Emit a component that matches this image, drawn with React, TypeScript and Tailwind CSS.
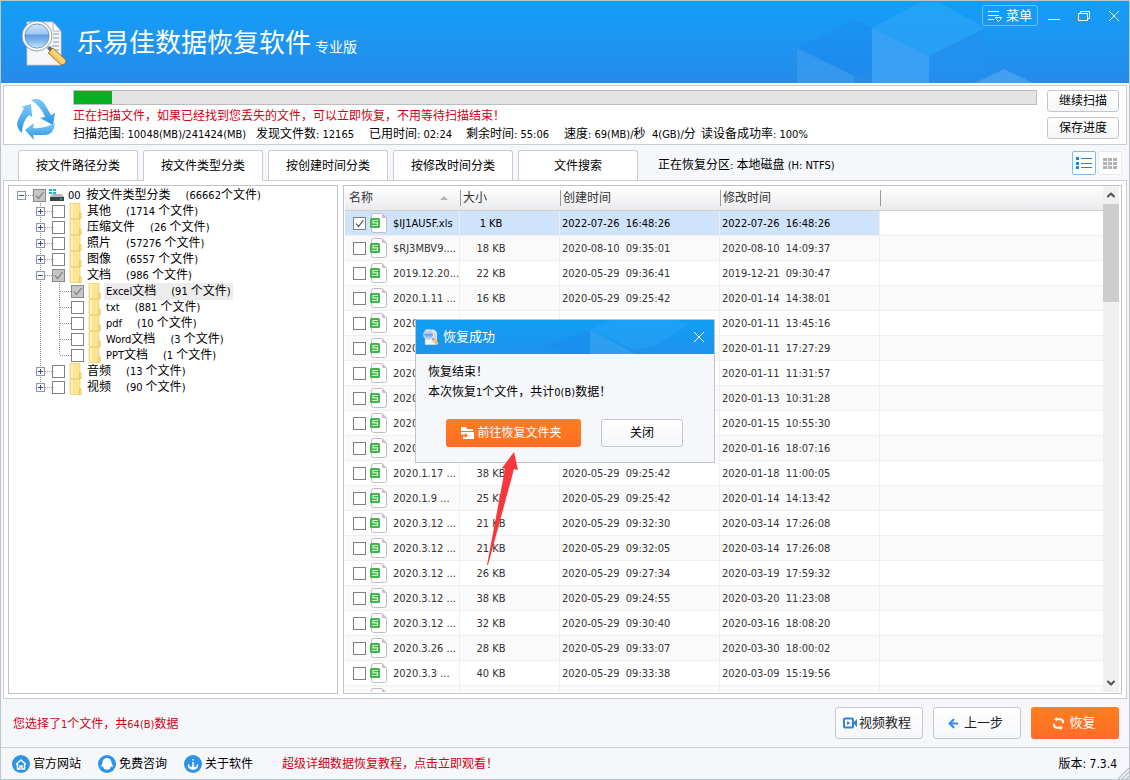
import { useState } from 'react';
import { ArrowLeft, ChevronDown, ChevronUp } from 'lucide-react';
import clsx from 'clsx';

type TreeItem = {
  label: string;
  count: string;
  level: 0 | 1 | 2;
  open?: boolean;
  checked?: boolean;
  last?: boolean;
};

const tree: TreeItem[] = [
  { label: '按文件类型分类', count: '(66662个文件)', level: 0, open: true, checked: true },
  { label: '其他', count: '(1714 个文件)', level: 1 },
  { label: '压缩文件', count: '(26 个文件)', level: 1 },
  { label: '照片', count: '(57276 个文件)', level: 1 },
  { label: '图像', count: '(6557 个文件)', level: 1 },
  { label: '文档', count: '(986 个文件)', level: 1, open: true, checked: true },
  { label: 'Excel文档', count: '(91 个文件)', level: 2, checked: true },
  { label: 'txt', count: '(881 个文件)', level: 2 },
  { label: 'pdf', count: '(10 个文件)', level: 2 },
  { label: 'Word文档', count: '(3 个文件)', level: 2 },
  { label: 'PPT文档', count: '(1 个文件)', level: 2, last: true },
  { label: '音频', count: '(13 个文件)', level: 1 },
  { label: '视频', count: '(90 个文件)', level: 1, last: true },
];

// name, size, created, modified
const files: [string, string, string, string][] = [
  ['$IJ1AU5F.xls', '1 KB', '2022-07-26  16:48:26', '2022-07-26  16:48:26'],
  ['$RJ3MBV9....', '18 KB', '2020-08-10  09:35:01', '2020-08-10  14:09:37'],
  ['2019.12.20...', '22 KB', '2020-05-29  09:36:41', '2019-12-21  09:30:47'],
  ['2020.1.11 ...', '16 KB', '2020-05-29  09:25:42', '2020-01-14  14:38:01'],
  ['2020', '', '', '2020-01-11  13:45:16'],
  ['2020', '', '', '2020-01-11  17:27:29'],
  ['2020', '', '', '2020-01-11  11:31:57'],
  ['2020', '', '', '2020-01-13  10:31:28'],
  ['2020', '', '', '2020-01-15  10:55:30'],
  ['2020', '', '', '2020-01-16  18:07:16'],
  ['2020.1.17 ...', '38 KB', '2020-05-29  09:25:42', '2020-01-18  11:00:05'],
  ['2020.1.9 ...', '25 KB', '2020-05-29  09:25:42', '2020-01-14  14:13:42'],
  ['2020.3.12 ...', '21 KB', '2020-05-29  09:32:30', '2020-03-14  17:26:08'],
  ['2020.3.12 ...', '21 KB', '2020-05-29  09:32:05', '2020-03-14  17:26:08'],
  ['2020.3.12 ...', '26 KB', '2020-05-29  09:27:34', '2020-03-19  17:59:32'],
  ['2020.3.12 ...', '38 KB', '2020-05-29  09:24:55', '2020-03-20  11:23:08'],
  ['2020.3.12 ...', '32 KB', '2020-05-29  09:30:40', '2020-03-16  18:08:20'],
  ['2020.3.26 ...', '28 KB', '2020-05-29  09:33:07', '2020-03-30  18:00:02'],
  ['2020.3.3 ...', '40 KB', '2020-05-29  09:33:38', '2020-03-09  15:19:56'],
  ['', '', '', ''],
];

const tabs = ['按文件路径分类', '按文件类型分类', '按创建时间分类', '按修改时间分类', '文件搜索'];

// Latin runs are set one pixel smaller than the Chinese around them
const Mixed = ({ text }: { text: string }) => (
  <>
    {text.split(/([\x20-\x7e]+)/).map((part, i) =>
      i % 2 ? (
        <span key={i} className="text-[11px]">
          {part}
        </span>
      ) : (
        part
      ),
    )}
  </>
);

const Check = ({ label, checked, partial }: { label: string; checked?: boolean; partial?: boolean }) => (
  <span className="grid h-[13px] w-[13px] shrink-0">
    <input
      type="checkbox"
      aria-label={label}
      defaultChecked={checked}
      className={clsx(
        'peer col-start-1 row-start-1 m-0 h-[13px] w-[13px] appearance-none border border-[#808080] bg-white',
        partial && 'checked:border-[#8a8a8a] checked:bg-[#c6c6c6]',
      )}
    />
    <svg
      viewBox="0 0 13 13"
      className="pointer-events-none invisible col-start-1 row-start-1 h-[13px] w-[13px] peer-checked:visible"
    >
      <path d="M3 6.5 5.5 9.5 10.5 3" fill="none" stroke={partial ? '#777' : '#444'} strokeWidth="1.1" />
    </svg>
  </span>
);

const Logo = ({ className }: { className: string }) => (
  <svg viewBox="0 0 46 46" className={className} aria-hidden="true">
    <defs>
      <linearGradient id="lens" x1="0" y1="0" x2="0" y2="1">
        <stop offset="0" stopColor="#d3e6fb" />
        <stop offset=".42" stopColor="#9cc6f3" />
        <stop offset=".46" stopColor="#5d9be4" />
        <stop offset=".75" stopColor="#8bbdf0" />
        <stop offset="1" stopColor="#c9edfd" />
      </linearGradient>
      <linearGradient id="handle" x1="0" y1="1" x2="1" y2="0">
        <stop offset="0" stopColor="#c87b10" />
        <stop offset=".55" stopColor="#ffd977" />
        <stop offset="1" stopColor="#a8640c" />
      </linearGradient>
    </defs>
    <path d="M6 2h26l8 9v34H6z" fill="#f6f6f8" stroke="#c9ced8" strokeWidth=".8" />
    <path d="M32 2v9h8z" fill="#fff" stroke="#9aa5b8" strokeWidth=".8" />
    <path d="M32 14h6M32 18h6M32 22h6M31 26h7M29 30h9" stroke="#8795ad" strokeWidth="1.2" />
    <circle cx="16" cy="16" r="15" fill="#e3e8f0" stroke="#8693a9" strokeWidth=".8" />
    <circle cx="16" cy="16" r="13.500" fill="none" stroke="#fff" strokeWidth="1.200" />
    <circle cx="16" cy="16" r="12" fill="url(#lens)" stroke="#7489ac" strokeWidth=".8" />
    <path d="M26 28l3-2 3 3-3 3z" fill="#5d6880" />
    <path d="M27 33l5-5 13 12q0 5-5 5z" fill="url(#handle)" stroke="#8a5a17" strokeWidth=".7" />
  </svg>
);

const RecycleLogo = () => (
  <svg viewBox="0 0 40 42" className="h-[42px] w-10" aria-hidden="true">
    <defs>
      <linearGradient id="recycle" x1="0" y1="0" x2="0" y2="1">
        <stop offset="0" stopColor="#7cc9f7" />
        <stop offset="1" stopColor="#2893e2" />
      </linearGradient>
    </defs>
    <g fill="url(#recycle)">
      <path d="M15 2q8-3 13 3l7 12 4-2-2 12-13-7 5-1q-4-11-14-17z" />
      <path d="M5 9l10-3 1 13-3-2Q6 24 6 35q-7-6-4-13l6-12z" />
      <path d="M9 32l9-7-1 5q11 1 22-5-1 11-9 12H17l1 5z" />
    </g>
  </svg>
);

// Expand box plus the dotted connector that leads to the tick box
const Branch = ({ item }: { item: TreeItem }) => {
  const dots = { stroke: '#8c8c8c', strokeDasharray: '1 1' };
  return (
    <svg viewBox="0 0 16 16" className="h-4 w-4 shrink-0" shapeRendering="crispEdges" aria-hidden="true">
      {item.level > 0 && <path d={item.last ? 'M4.5 0v8' : 'M4.5 0v16'} {...dots} />}
      <path d="M5 8.5h11" {...dots} />
      {item.level < 2 && (
        <>
          <rect x=".5" y="4.5" width="8" height="8" fill="#f8f9fb" stroke="#8f98a4" />
          <path d={item.open ? 'M2 8.5h5' : 'M2 8.5h5M4.5 6v5'} stroke="#3c4f86" />
        </>
      )}
    </svg>
  );
};

const TreeRow = ({ item }: { item: TreeItem }) => (
  <li className="flex h-4 items-center">
    {item.level > 0 && <span className="w-[19px] shrink-0" />}
    {item.level > 1 && (
      <svg viewBox="0 0 19 16" className="h-4 w-[19px] shrink-0" shapeRendering="crispEdges" aria-hidden="true">
        <path d="M4.5 0v16" stroke="#8c8c8c" strokeDasharray="1 1" />
      </svg>
    )}
    <Branch item={item} />
    <Check label={item.label} checked={item.checked} partial />
    <span className="flex w-5 shrink-0 justify-center">
      {item.level === 0 ? (
        <svg viewBox="0 0 15 14" className="h-3.5 w-[15px]">
          <path d="M0 1h3v2H0zM4 1h3v2H4zM0 4h3v2H0zM4 4h3v2H4z" fill="#20aee8" />
          <path d="M3 6h10l2 3H1z" fill="#b4bcc0" />
          <path d="M1 9h14v4H1z" fill="#3b4548" />
          <path d="M11 10.5h2v1h-2z" fill="#58dc83" />
        </svg>
      ) : (
        <svg viewBox="0 0 13 16" className="h-4 w-[13px]">
          <path d="M1 .5h10v9l1 1v5H1z" fill="#fde596" stroke="#eccb62" strokeWidth=".7" />
          <path d="M2 1h2v14H2z" fill="#fff0b8" />
          <path d="M10.500 10h1.500v5.500h-1.500z" fill="#fff0b5" stroke="#e3b93f" strokeWidth=".7" />
        </svg>
      )}
    </span>
    <span
      className={clsx(
        'flex gap-[15px] whitespace-pre px-0.5 leading-4',
        item.label === 'Excel文档' && 'bg-[#ececec]',
      )}
    >
      <span>
        {item.level === 0 && <span className="pr-1.5 text-[11px]">00</span>}
        <Mixed text={item.label} />
      </span>
      <span>
        <Mixed text={item.count} />
      </span>
    </span>
  </li>
);

const SheetIcon = () => (
  <svg viewBox="0 0 17 20" className="h-5 w-[17px] shrink-0" aria-hidden="true">
    <path d="M3.5.5h8.500l4.500 4.500v12.500q0 2-2 2h-11q-2 0-2-2v-15q0-2 2-2z" fill="#fff" stroke="#c3b8c5" />
    <path d="M12 .5v3q0 1.500 1.500 1.500h3z" fill="#d4b6c8" />
    <rect x="0" y="5" width="10" height="10" rx="1.500" fill="#3fb54b" />
    <path d="M8 7.500H3v2.300h4.500v2.700H2" fill="none" stroke="#d6f5d2" strokeWidth="1.200" />
  </svg>
);

const CloseCross = () => (
  <svg viewBox="0 0 12 12" className="h-3 w-3" aria-hidden="true">
    <path d="M1 1l10 10M11 1 1 11" stroke="#fff" />
  </svg>
);

const FileTable = () => (
  <table className="w-full table-fixed border-separate border-spacing-0 text-left text-[11px] text-[#333]">
    <colgroup>
      <col className="w-[115px]" />
      <col className="w-[100px]" />
      <col className="w-40" />
      <col className="w-40" />
      <col />
    </colgroup>
    <thead>
      <tr className="bg-linear-to-b from-white to-[#e9eaec] text-xs">
        {['名称', '大小', '创建时间', '修改时间', ''].map((title, i) => (
          <th key={i} className="h-[25px] border-b border-[#cfcfcf] p-0 font-normal">
            <span
              className={clsx(
                'flex h-4 items-center leading-4',
                i === 0 ? 'justify-between pr-3 pl-1' : 'border-l border-[#999] pl-0.5',
              )}
            >
              {title}
              {i === 0 && (
                <svg viewBox="0 0 8 4" className="h-1 w-2">
                  <path d="M0 4 4 0l4 4z" fill="#b5b5b5" />
                </svg>
              )}
            </span>
          </th>
        ))}
      </tr>
    </thead>
    <tbody>
      {files.map(([name, size, created, modified], i) => {
        const cell = clsx(
          'h-[25px] overflow-hidden border-r border-b border-[#efefef] p-0 whitespace-pre',
          i === 0 && 'bg-[#cfe3fa] text-black',
        );
        return (
          <tr key={i} className="even:bg-[#fafafa]">
            <td className={cell}>
              <span className="flex items-center gap-1 pl-2">
                <Check label={name || '文件'} checked={i === 0} />
                <SheetIcon />
                <span className="pt-0.5 pl-0.5">{name}</span>
              </span>
            </td>
            <td className={cell}>
              <span className="block w-[62px] pt-0.5 text-center">{size}</span>
            </td>
            <td className={cell}>
              <span className="block pt-0.5 pl-0.5">{created}</span>
            </td>
            <td className={cell}>
              <span className="block pt-0.5 pl-0.5">{modified}</span>
            </td>
            <td className="h-[25px] border-b border-[#efefef] p-0" />
          </tr>
        );
      })}
    </tbody>
  </table>
);

const plainButton =
  'flex items-center justify-center rounded-[3px] border border-[#c3c6cb] bg-linear-to-b from-white to-[#f5f6f8]';
const orangeButton =
  'flex items-center justify-center rounded-[3px] bg-linear-to-b from-[#ff7f1c] to-[#ff6b26] text-white';

const SuccessDialog = ({ onClose }: { onClose: () => void }) => (
  <div className="pointer-events-none absolute inset-0 flex items-center justify-center pt-0.5">
    <div
      role="dialog"
      aria-label="恢复成功"
      className="pointer-events-auto relative h-36 w-[300px] border border-[#c0c4c9] bg-[#f5f7fa]"
    >
      <div className="relative flex h-[34px] items-center justify-between bg-linear-to-b from-[#109ef4] to-[#1d92ec] pr-[9px] pl-[7px] text-[13px] text-white">
        <svg viewBox="0 0 298 34" preserveAspectRatio="xMaxYMax slice" className="absolute inset-0 h-full w-full">
          <path d="M174 10 194 0h66l12 5-34 22-20 3z" fill="#2aa8fa" opacity=".4" />
          <path d="M174 10l45 24h-45z" fill="#4eacf6" opacity=".4" />
          <path d="M132 25l42-15v24h-26z" fill="#1784ea" opacity=".3" />
        </svg>
        <span className="relative flex items-center gap-1">
          <Logo className="h-4 w-4" />
          恢复成功
        </span>
        <button type="button" aria-label="关闭窗口" onClick={onClose} className="relative">
          <CloseCross />
        </button>
      </div>
      <div className="px-3 pt-2 leading-5">
        <p>恢复结束！</p>
        <p>
          <Mixed text="本次恢复1个文件，共计0(B)数据！" />
        </p>
      </div>
      <div className="flex gap-5 pt-4 pl-[30px]">
        <button type="button" className={clsx(orangeButton, 'h-7 w-[135px] gap-[3px] pr-1')}>
          <svg viewBox="0 0 13 12" className="h-3 w-[13px]" aria-hidden="true">
            <path d="M0 0h5l1 2h6v2H0z" fill="#fff" />
            <path d="M2 5h11v7H2V9.500h2V11l3-2.500L4 6v1.500H0V5z" fill="#fff" />
          </svg>
          前往恢复文件夹
        </button>
        <button type="button" onClick={onClose} className={clsx(plainButton, 'h-7 w-[82px]')}>
          关闭
        </button>
      </div>
      <svg viewBox="0 0 34 114" className="pointer-events-none absolute top-[131px] left-[70px] h-[114px] w-[34px]">
        <path d="M1 114 19 18l-3-1L28 1l4 18-4-1L2 114z" fill="#f7373c" />
      </svg>
    </div>
  </div>
);

const footerLinks = [
  {
    label: '官方网站',
    icon: <path d="M4 9.500 9 5l5 4.500M5.500 9v5h2.500v-3h2v3h2.500V9" fill="none" stroke="#fff" strokeWidth="1.400" />,
  },
  {
    label: '免费咨询',
    icon: (
      <path
        d="M9 3c-3 0-4.500 2.500-4.500 5-1 1.500-1.500 3-1 4l1.500-.5 1 2c0 1.500 6 1.500 6 0l1-2 1.500.5c.5-1 0-2.500-1-4 0-2.500-1.500-5-4.500-5z"
        fill="#fff"
      />
    ),
  },
  {
    label: '关于软件',
    icon: (
      <path d="M9 4v1.500M9 7v5.500M4.500 9.500c0 6 9 6 9 0M4.500 12.500h9" fill="none" stroke="#fff" strokeWidth="1.500" />
    ),
  },
];

const App = () => {
  const [dialogOpen, setDialogOpen] = useState(true);
  const [activeTab, setActiveTab] = useState(1);

  return (
    <div className="relative flex h-screen min-w-[960px] flex-col overflow-hidden border border-[#b9c5cf] bg-[#f5f7fa] font-['DejaVu_Sans_Condensed','Noto_Sans_CJK_SC',sans-serif] text-xs text-black">
      <header className="relative flex h-[82px] shrink-0 items-start justify-between bg-linear-to-b from-[#109ff7] to-[#258bea] text-white">
        <svg viewBox="0 0 340 82" className="absolute top-0 right-0 h-[82px] w-[340px]" aria-hidden="true">
          <path d="M8 47 65 19l18 8v44l-18 5z" fill="#1681ec" opacity=".25" />
          <path d="M8 47l57 28v7H8z" fill="#3c9df1" opacity=".7" />
          <path d="M83 27 131 1h18l48 26-57 28z" fill="#2da8f8" opacity=".6" />
          <path d="M83 27l57 28v27H83z" fill="#3ba2f5" opacity=".9" />
          <path d="M140 55l57-28v55h-57z" fill="#2390f0" opacity=".5" />
          <path d="M186 82l29-14 29 14z" fill="#439ff2" />
        </svg>
        <div className="relative flex items-center gap-2.5 pt-[19px] pl-5">
          <Logo className="h-[46px] w-[46px]" />
          <h1 className="flex items-baseline gap-1 text-[26px] leading-10">
            <span className="font-normal">乐易佳数据恢复软件</span>
            <span className="text-sm">专业版</span>
          </h1>
        </div>
        <div className="relative flex items-center gap-2.5 pt-1 pr-[9px]">
          <button
            type="button"
            className="flex h-[21px] w-14 items-center justify-center gap-1 rounded-[3px] border border-[#6cc1fa] text-[13px]"
          >
            <svg viewBox="0 0 14 12" className="h-3 w-3.5" aria-hidden="true">
              <path d="M0 1.500h11M0 5.500h11M0 9.500h6" stroke="#fff" />
              <path d="M7.500 7.500h6l-1 2-2 2-2-2z" fill="none" stroke="#fff" />
            </svg>
            菜单
          </button>
          <div className="flex gap-[18px]">
            <button type="button" aria-label="最小化">
              <svg viewBox="0 0 12 12" className="h-3 w-3">
                <path d="M0 9.500h12" stroke="#fff" />
              </svg>
            </button>
            <button type="button" aria-label="还原">
              <svg viewBox="0 0 12 12" className="h-3 w-3" fill="none" stroke="#fff">
                <path d="M.5 3.500h9v7h-9zM2.500 3.500v-2h9v7h-2" />
              </svg>
            </button>
            <button type="button" aria-label="关闭">
              <CloseCross />
            </button>
          </div>
        </div>
      </header>

      <section className="mx-0.5 mt-0.5 flex h-[60px] shrink-0 border border-[#c9cdd2] bg-white pr-[7px] pl-3">
        <div className="flex w-[57px] shrink-0 items-center pt-2">
          <RecycleLogo />
        </div>
        <div className="min-w-0 flex-1 pt-1">
          <div className="h-[15px] border border-[#bcbcbc] bg-[#e4e4e4]">
            <div className="h-full w-[4%] bg-[#06b025]" />
          </div>
          <p className="pt-0.5 leading-[18px] text-[#d40010]">
            正在扫描文件，如果已经找到您丢失的文件，可以立即恢复，不用等待扫描结束！
          </p>
          <div className="flex leading-[18px] whitespace-nowrap">
            <span className="w-[183px]"><Mixed text="扫描范围: 10048(MB)/241424(MB)" /></span>
            <span className="w-[113px]"><Mixed text="发现文件数: 12165" /></span>
            <span className="w-[97px]"><Mixed text="已用时间: 02:24" /></span>
            <span className="w-[98px]"><Mixed text="剩余时间: 55:06" /></span>
            <span className="w-[88px]"><Mixed text="速度: 69(MB)/秒" /></span>
            <span className="w-[49px]"><Mixed text="4(GB)/分" /></span>
            <span><Mixed text="读设备成功率: 100%" /></span>
          </div>
        </div>
        <div className="ml-2.5 flex flex-col gap-[5px] pt-1">
          <button type="button" className={clsx(plainButton, 'h-[22px] w-[72px]')}>继续扫描</button>
          <button type="button" className={clsx(plainButton, 'h-[22px] w-[72px]')}>保存进度</button>
        </div>
      </section>

      <nav className="flex shrink-0 items-end gap-[5px] pt-[5px] pr-[7px] pl-[17px]">
        {tabs.map((tab, i) => (
          <button
            key={tab}
            type="button"
            onClick={() => setActiveTab(i)}
            className={clsx(
              'w-[120px] rounded-t-[3px] border border-b-0 border-[#c9cdd2] bg-white',
              i === activeTab ? 'relative -mb-px h-[31px]' : 'h-[30px]',
            )}
          >
            {tab}
          </button>
        ))}
        <span className="flex h-[30px] flex-1 items-center pl-[15px] whitespace-pre">
          <span><Mixed text="正在恢复分区: 本地磁盘 (H: NTFS)" /></span>
        </span>
        <span className="flex gap-0.5 pb-[5px]">
          <button type="button" aria-label="列表视图" className="flex h-6 w-6 items-center justify-center rounded-[2px] border border-[#7cbdf0] bg-white">
            <svg viewBox="0 0 16 12" className="h-3 w-4" shapeRendering="crispEdges">
              <path d="M0 0h3v3H0zM0 4.500h3v3H0zM0 9h3v3H0z" fill="#2583cc" />
              <path d="M5 1.500h11M5 6h11M5 10.500h11" stroke="#2583cc" />
            </svg>
          </button>
          <button type="button" aria-label="图标视图" className="flex h-6 w-6 items-center justify-center rounded-[2px] border border-[#e9ebee] bg-white">
            <svg viewBox="0 0 14 11" className="h-[11px] w-3.5" shapeRendering="crispEdges">
              <path
                d="M0 0h4v3H0zM5 0h4v3H5zM10 0h4v3h-4zM0 4h4v3H0zM5 4h4v3H5zM10 4h4v3h-4zM0 8h4v3H0zM5 8h4v3H5zM10 8h4v3h-4z"
                fill="#aeb0b3"
              />
            </svg>
          </button>
        </span>
      </nav>

      <main className="mx-0.5 flex min-h-0 flex-1 gap-[5px] border border-[#c9cdd2] bg-white p-1">
        <ul className="w-[330px] shrink-0 overflow-hidden border border-[#c0c4c9] pt-px pl-2">
          {tree.map((item) => (
            <TreeRow key={item.label} item={item} />
          ))}
        </ul>
        <div className="flex min-w-0 flex-1 border border-[#c0c4c9] pr-0.5 pb-px pl-px">
          <div className="min-w-0 flex-1 overflow-hidden">
            <FileTable />
          </div>
          <div className="flex w-4 shrink-0 flex-col bg-[#f0f0f0] text-[#505050]">
            <button type="button" aria-label="向上滚动" className="flex h-[18px] items-center justify-center">
              <ChevronUp size={12} strokeWidth={4} />
            </button>
            <div className="h-[98px] bg-[#cdcdcd]" />
            <button type="button" aria-label="向下滚动" className="mt-auto flex h-[18px] items-center justify-center">
              <ChevronDown size={12} strokeWidth={4} />
            </button>
          </div>
        </div>
      </main>

      <div className="flex h-[49px] shrink-0 items-center justify-between border-b border-[#c9cdd2] pr-2.5 pl-3 text-[13px]">
        <p className="pt-0.5 text-xs text-[#d40010]">
          <Mixed text="您选择了1个文件，共64(B)数据" />
        </p>
        <div className="flex gap-2.5">
          <button type="button" className={clsx(plainButton, 'h-8 w-[88px] gap-0.5 pr-1 text-[#222]')}>
            <svg viewBox="0 0 14 12" className="h-3 w-3.5" aria-hidden="true">
              <rect x="1" y="1.500" width="9" height="9" rx="1" fill="none" stroke="#2f86d8" strokeWidth="2" />
              <path d="M4 4v4l3.500-2z" fill="#2f86d8" />
              <path d="M11 5l3-3v8l-3-3z" fill="#2f86d8" />
            </svg>
            视频教程
          </button>
          <button type="button" className={clsx(plainButton, 'h-8 w-[88px] gap-1 pr-1 text-[#222]')}>
            <ArrowLeft size={13} strokeWidth={4} className="text-[#2f8de4]" />
            上一步
          </button>
          <button type="button" className={clsx(orangeButton, 'h-8 w-[88px] gap-1 pr-0.5')}>
            <svg viewBox="0 0 13 13" className="h-[13px] w-[13px]" fill="none" stroke="#fff" strokeWidth="2">
              <path d="M4 2.200h4q3 0 3 3v1M9 10.800H5q-3 0-3-3v-1" />
              <path d="M5 0v4.500L2 2.200zM8 8.500V13l3-2.200z" fill="#fff" stroke="none" />
            </svg>
            恢复
          </button>
        </div>
      </div>

      <footer className="relative flex h-[31px] shrink-0 items-center justify-between pr-3 pl-[11px]">
        <div className="flex items-center gap-[17px]">
          {footerLinks.map(({ label, icon }) => (
            <a key={label} href="#" className="flex items-center gap-[3px]">
              <svg viewBox="0 0 18 18" className="h-[18px] w-[18px]" aria-hidden="true">
                <circle cx="9" cy="9" r="9" fill="#2f93e4" />
                {icon}
              </svg>
              {label}
            </a>
          ))}
          <a href="#" className="pl-3 text-[#d40010]">
            超级详细数据恢复教程，点击立即观看！
          </a>
        </div>
        <span>版本: 7.3.4</span>
        <svg viewBox="0 0 11 11" className="absolute right-0 bottom-0 h-[11px] w-[11px]" aria-hidden="true">
          <path d="M0 11 11 0M4 11l7-7M8 11l3-3" stroke="#b5b8bc" strokeWidth="1.200" />
        </svg>
      </footer>

      {dialogOpen && <SuccessDialog onClose={() => setDialogOpen(false)} />}
    </div>
  );
};

export default App;
